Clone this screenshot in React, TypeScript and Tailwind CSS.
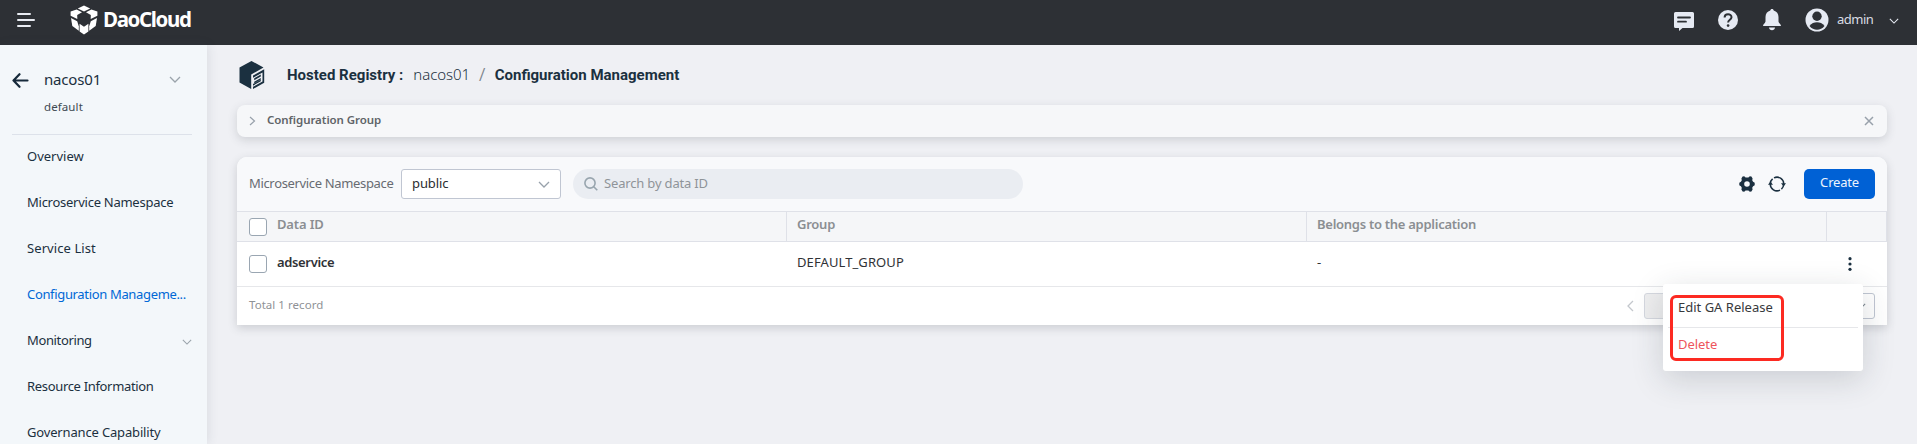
import type { ReactNode } from "react";

function Chevron({ className = "", d = "M1 1l5 5 5-5" }: { className?: string; d?: string }) {
  return (
    <svg viewBox="0 0 12 7" className={className} fill="none" stroke="currentColor" strokeWidth="1.3">
      <path d={d} />
    </svg>
  );
}

function Logo() {
  return (
    <svg viewBox="0 0 28 30" className="h-[30px] w-7" fill="#fff">
      <path d="M14 .6l6.200 3L14 6.600l-6.200-3z" />
      <path d="M6.600 4.400l5.400 2.800-4.800 2.700.1 4.100L.6 10.700V6.400z" />
      <path d="M21.400 4.400L16 7.200l4.800 2.700-.1 4.100 6.700-3.300V6.400z" />
      <path d="M1 13l6.200 3.300 1.600 5v4.500L2.300 21z" />
      <path d="M27 13l-6.200 3.300-1.600 5v4.500l6.500-4.800z" />
      <path d="M9.600 18.800l4.400 3 4.400-3v7.700L14 29.600l-4.400-3.100z" />
    </svg>
  );
}

function Header() {
  return (
    <header className="flex h-[45px] shrink-0 items-center bg-[#2d3035] text-[#e6eaf3]">
      <svg viewBox="0 0 18 14" className="ml-[17px] mt-[-5px] h-[14px] w-[18px]" stroke="#e8ebf2" strokeWidth="2" strokeLinecap="round">
        <path d="M1 1h12M1 7h16M1 13h12" />
      </svg>
      <div className="-mt-[6px] ml-[35px] flex items-center">
        <Logo />
        <span className="-mt-[2px] ml-[5px] text-[20.5px] font-bold leading-[30px] tracking-[-1.35px] text-white">DaoCloud</span>
      </div>
      <div className="-mt-[5px] ml-auto flex items-center">
        <svg viewBox="0 0 20 19" className="mt-[2px] h-[19px] w-5" fill="#e6eaf3">
          <path d="M1.5 0h17A1.5 1.5 0 0 1 20 1.500v13a1.500 1.500 0 0 1-1.500 1.500H8.500L5 19v-3H1.500A1.500 1.500 0 0 1 0 14.500v-13A1.500 1.500 0 0 1 1.500 0z" />
          <path d="M4 5.500h12M4 9.700h8" stroke="#2d3035" strokeWidth="1.800" strokeLinecap="round" />
        </svg>
        <svg viewBox="0 0 20 20" className="ml-6 h-5 w-5">
          <circle cx="10" cy="10" r="10" fill="#e6eaf3" />
          <path d="M6.600 7.600c0-4.300 6.900-4.300 6.900-.3 0 2.500-3.400 2.500-3.400 5.200" fill="none" stroke="#2d3035" strokeWidth="2" />
          <circle cx="10.100" cy="15.600" r="1.300" fill="#2d3035" />
        </svg>
        <svg viewBox="0 0 20 22" className="ml-6 h-[22px] w-5" fill="#e6eaf3">
          <path d="M10 0c1 0 1.600.6 1.700 1.500 3 .8 4.800 3.300 4.800 6.500v4.500c.3 2 2.500 2.500 2.500 4.500H1c0-2 2.200-2.500 2.500-4.500V8c0-3.200 1.800-5.700 4.800-6.500C8.400.6 9 0 10 0zM7 18.500h6c-.2 1.800-1.400 2.800-3 2.800s-2.800-1-3-2.800z" />
        </svg>
        <svg viewBox="0 0 24 24" className="ml-[23px] h-6 w-6">
          <circle cx="12" cy="12" r="11.500" fill="#e6eaf3" />
          <circle cx="12" cy="8.300" r="4.700" fill="#2d3035" />
          <path d="M4.500 18c2-2.700 4.700-3.700 7.500-3.700s5.500 1 7.500 3.700c-2 2.600-4.700 3.800-7.500 3.800S6.500 20.600 4.500 18z" fill="#2d3035" />
        </svg>
        <span className="ml-2 w-[36px] text-[13px] tracking-[-0.5px] text-[#d9dce4]">admin</span>
        <Chevron className="ml-[16px] mr-[18px] mt-[2px] h-[6px] w-[10px]" />
      </div>
    </header>
  );
}

const navItems = [
  { label: "Overview", cls: "tracking-[0px]" },
  { label: "Microservice Namespace", cls: "tracking-[-0.26px]" },
  { label: "Service List", cls: "tracking-[0.08px]" },
  { label: "Configuration Manageme...", cls: "tracking-[-0.34px] text-[#0068d6]" },
  { label: "Monitoring", cls: "tracking-[-0.36px]", open: true },
  { label: "Resource Information", cls: "tracking-[-0.33px]" },
  { label: "Governance Capability", cls: "tracking-[-0.16px]" },
];

function Sidebar() {
  return (
    <aside className="relative z-10 w-[207px] shrink-0 bg-[#f3f7fa] text-[#1b3040] shadow-[1px_0_10px_rgba(60,70,90,0.12)]">
      <div className="ml-3 mr-[15px] flex h-[90px] border-b border-[#dde2ea]">
        <svg viewBox="0 0 17 15" className="mt-7 h-[15px] w-[17px]" fill="none" stroke="#16293a" strokeWidth="2.200" strokeLinecap="round" strokeLinejoin="round">
          <path d="M7.500 1.200L1.500 7.500l6 6.300M1.500 7.500h14" />
        </svg>
        <div className="ml-[15px] flex flex-col pt-[22px]">
          <span className="text-[15px] leading-6 tracking-[-0.18px]">nacos01</span>
          <span className="mt-[6px] text-[11.5px] leading-5 tracking-[0.1px] text-[#404a52]">default</span>
        </div>
        <Chevron className="ml-auto mr-[11px] mt-[31px] h-[7px] w-3 text-[#9aa3ab]" />
      </div>
      <nav className="-mt-px">
        {navItems.map((n) => (
          <div key={n.label} className="flex h-[46px] items-center pl-[27px] pr-[15px] text-[13px]">
            <span className={n.cls}>{n.label}</span>
            {n.open && <Chevron className="ml-auto mt-[2px] h-[6px] w-[10px] text-[#9aa3ab]" />}
          </div>
        ))}
      </nav>
    </aside>
  );
}

function Breadcrumb() {
  return (
    <div className="flex h-[60px] items-center pl-[2px] text-[#1b3040]">
      <svg viewBox="0 0 26 28" className="h-7 w-[26px]" fill="#1b3040">
        <path d="M12.500 0l12 6.500-12.300 7V28L.5 21.500V6.500z" />
        <path d="M25.200 8.300v13.400L14 28v-2.200l9.500-5.300v-9L14 16.800v-2.200z" />
        <path d="M15.200 17.300l6.600-3.800v1.900l-6.600 3.800zM15.200 20.700l6.600-3.800v1.900l-6.600 3.800zM14 24.700l7.800-4.500v-1.700L14 23z" />
      </svg>
      <div className="flex items-center font-['Roboto',sans-serif] text-[15px] font-bold">
        <span className="ml-[22px]">Hosted Registry :</span>
        <span className="-mt-px ml-[10px] font-['Noto_Sans',sans-serif] font-light tracking-[-0.05px]">nacos01</span>
        <span className="ml-[9px] text-base font-normal text-[#7d858c]">/</span>
        <span className="ml-[9px]">Configuration Management</span>
      </div>
    </div>
  );
}

function Checkbox() {
  return <span className="size-[18px] shrink-0 rounded-[3px] border border-[#9aa6b2] bg-white" />;
}

function Cell({ className = "", children }: { className?: string; children?: ReactNode }) {
  return <div className={`flex items-center px-[10px] ${className}`}>{children}</div>;
}

function Toolbar() {
  return (
    <div className="flex h-[55px] items-center rounded-t-[10px] border-b border-[#dfe1e8] bg-[#f8f9fb] pl-3 pr-3 text-[13px]">
      <span className="-mt-px w-[152px] whitespace-nowrap tracking-[-0.34px] text-[#686c72]">Microservice Namespace</span>
      <div className="flex h-[30px] w-40 items-center rounded-[3px] border border-[#c0c6d2] bg-white pl-[10px] pr-[10px] text-[#2b2d30]">
        <span className="-mt-px tracking-[-0.1px]">public</span>
        <Chevron className="ml-auto h-[7px] w-3 text-[#98a1ab]" />
      </div>
      <div className="ml-3 flex h-[30px] w-[450px] items-center rounded-full bg-[#eaedf2] pl-[11px] text-[#8f9499]">
        <svg viewBox="0 0 14 14" className="h-[14px] w-[14px]" fill="none" stroke="#98a5ae" strokeWidth="1.600">
          <circle cx="6" cy="6" r="5.100" />
          <path d="M9.700 9.700l3.600 3.600" />
        </svg>
        <span className="-mt-px ml-[6px] tracking-[-0.17px]">Search by data ID</span>
      </div>
      <svg viewBox="0 0 16 16" className="ml-auto h-4 w-4" fill="#1b3040" fillRule="evenodd">
        <path d="M3.600.6l1.600-.3 1.400 1.200h2.800L10.800.3l1.600.3 1.200 2-.4 1.600.9 1.600 1.600.9v2.600l-1.600.9-.9 1.600.4 1.600-1.200 2-1.600.3-1.400-1.200H6.600l-1.400 1.200-1.600-.3-1.200-2 .4-1.600-.9-1.600L.3 9.300V6.700l1.600-.9.9-1.600-.4-1.600zM8 5.200a2.800 2.800 0 1 0 0 5.600 2.800 2.800 0 0 0 0-5.600z" />
      </svg>
      <svg viewBox="0 0 18 16" className="ml-[13px] h-4 w-[18px]" fill="none" stroke="#1b3040" strokeWidth="1.500">
        <path d="M2.300 7.500A6.700 6.700 0 0 1 4.600 2.900M6 1.900A6.700 6.700 0 0 1 15.700 8M15.700 8.500a6.700 6.700 0 0 1-2.300 4.600M12 14.100A6.700 6.700 0 0 1 2.300 8" />
        <path d="M0 8.700h5L2.400 5.600zM18 7.300h-5l2.600 3.100z" fill="#1b3040" stroke="none" />
      </svg>
      <button className="ml-[18px] h-[30px] w-[71px] rounded-[5px] bg-[#0061d5] pb-[2px] text-[13px] tracking-[-0.2px] text-[#edf4fd]">Create</button>
    </div>
  );
}

function ActionMenu() {
  return (
    <div className="absolute left-[1426px] top-[127px] h-[87px] w-[200px] rounded-[3px] bg-white px-[5px] text-[13px] text-[#37393c] shadow-[0_8px_32px_rgba(40,50,60,0.18)]">
      <div className="flex h-[44px] items-center border-b border-[#e6e7ea] pl-[10px] pt-[4px] tracking-[0px]">Edit GA Release</div>
      <div className="flex h-[34px] items-center pl-[10px] tracking-[-0.05px] text-[#ee555c]">Delete</div>
      <div className="absolute left-[7px] top-[11px] h-[66px] w-[114px] rounded-[6px] border-[3px] border-[#fc2a22]" />
    </div>
  );
}

function TablePanel() {
  return (
    <section className="relative mt-5 h-[168px] rounded-t-[10px] bg-white shadow-[0_3px_10px_rgba(60,65,75,0.2)]">
      <Toolbar />
      <div className="flex h-[30px] border-b border-[#dfe1e8] bg-[#f5f6f8] text-[13px] font-semibold text-[#8b8e92]">
        <Cell className="w-[550px] border-r border-[#dfe1e8] pl-3">
          <Checkbox />
          <span className="-mt-[3px] ml-[10px] tracking-[-0.15px]">Data ID</span>
        </Cell>
        <Cell className="w-[520px] border-r border-[#dfe1e8]">
          <span className="-mt-[3px] tracking-[-0.25px]">Group</span>
        </Cell>
        <Cell className="w-[520px] border-r border-[#dfe1e8]">
          <span className="-mt-[3px] tracking-[-0.27px]">Belongs to the application</span>
        </Cell>
        <Cell className="w-[60px] border-r border-[#dfe1e8]" />
      </div>
      <div className="flex h-[45px] border-b border-[#e6e7ea] text-[13px] text-[#303236]">
        <Cell className="w-[550px] pl-3">
          <Checkbox />
          <span className="-mt-[2px] ml-[10px] font-semibold tracking-[-0.35px]">adservice</span>
        </Cell>
        <Cell className="w-[520px]">
          <span className="-mt-[2px] tracking-[0.1px]">DEFAULT_GROUP</span>
        </Cell>
        <Cell className="w-[520px]">
          <span className="-mt-[2px]">-</span>
        </Cell>
        <Cell className="w-[60px] pl-[21px]">
          <svg viewBox="0 0 4 14" className="h-[14px] w-1" fill="#1b3040">
            <circle cx="2" cy="1.700" r="1.600" />
            <circle cx="2" cy="7" r="1.600" />
            <circle cx="2" cy="12.300" r="1.600" />
          </svg>
        </Cell>
      </div>
      <div className="flex h-[38px] items-center px-3">
        <span className="-mt-[2px] text-[11.5px] tracking-[0.04px] text-[#8f9296]">Total 1 record</span>
        <svg viewBox="0 0 7 12" className="ml-auto h-3 w-[7px]" fill="none" stroke="#c3c7cc" strokeWidth="1.300">
          <path d="M6 1L1 6l5 5" />
        </svg>
        <span className="ml-[10px] h-[26px] w-[50px] rounded-[3px] border border-[#d5d8df] bg-[#eeeeef]" />
        <span className="ml-[101px] flex h-[26px] w-20 items-center justify-end rounded-[3px] border border-[#c0c6d2] bg-white pr-2">
          <Chevron className="h-[6px] w-[10px] text-[#7d868f]" />
        </span>
      </div>
      <ActionMenu />
    </section>
  );
}

export default function App() {
  return (
    <div className="flex h-[444px] w-full flex-col overflow-hidden bg-[#eff0f4] font-['Noto_Sans',sans-serif]">
      <Header />
      <div className="flex min-h-0 flex-1">
        <Sidebar />
        <main className="flex-1 pl-[30px] pr-[30px]">
          <Breadcrumb />
          <section className="flex h-8 items-center rounded-[8px] bg-[#f6f7f9] px-3 shadow-[0_3px_10px_rgba(60,65,75,0.18)]">
            <svg viewBox="0 0 7 10" className="h-[10px] w-[7px]" fill="none" stroke="#98a1ab" strokeWidth="1.200">
              <path d="M1 1l4.500 4L1 9" />
            </svg>
            <span className="-mt-[3px] ml-[11px] text-[11.5px] font-semibold tracking-[-0.06px] text-[#606468]">Configuration Group</span>
            <svg viewBox="0 0 10 10" className="ml-auto mr-[1px] h-[10px] w-[10px]" stroke="#98a1ab" strokeWidth="1.500">
              <path d="M1 1l8 8M9 1L1 9" />
            </svg>
          </section>
          <TablePanel />
        </main>
      </div>
    </div>
  );
}
